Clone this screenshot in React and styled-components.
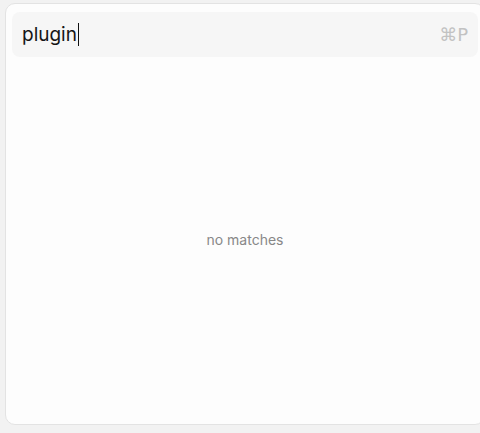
import React from 'react';
import styled, { createGlobalStyle } from 'styled-components';

const Global = createGlobalStyle`
    html, body {
        margin:0;
        padding:0;
        background:#f2f2f2;
        font-family: Inter, "Noto Sans", sans-serif;
        overflow:hidden;
    }
`;

const Panel = styled.div`
    box-sizing:border-box;
    margin:3px 0 0 5px;
    width:480px;
    height:422px;
    background:#fdfdfd;
    border:1px solid #e3e3e3;
    border-radius:10px;
    display:flex;
    flex-direction:column;
    padding:8px 6px;
`;

const SearchBar = styled.div`
    height:45px;
    display:flex;
    align-items:center;
    justify-content:space-between;
    background:#f6f6f6;
    border-radius:8px;
    padding:0 10px 0 10px;
`;

const Query = styled.div`
    display:flex;
    align-items:center;
    font-size:19px;
    color:#151515;
`;

const Caret = styled.span`
    width:1.5px;
    height:23px;
    background:#111;
    margin-left:1px;
`;

const Shortcut = styled.span`
    font-size:18px;
    color:#c2c2c2;
    font-family: "DejaVu Sans", sans-serif;
`;

const Empty = styled.div`
    flex:1;
    display:flex;
    align-items:center;
    justify-content:center;
    font-size:14px;
    color:#888;
    padding-top:6px;
`;

export default function App() {
    return (
        <>
            <Global />
            <Panel>
                <SearchBar>
                    <Query>
                        plugin<Caret />
                    </Query>
                    <Shortcut>⌘P</Shortcut>
                </SearchBar>
                <Empty>no matches</Empty>
            </Panel>
        </>
    );
}
